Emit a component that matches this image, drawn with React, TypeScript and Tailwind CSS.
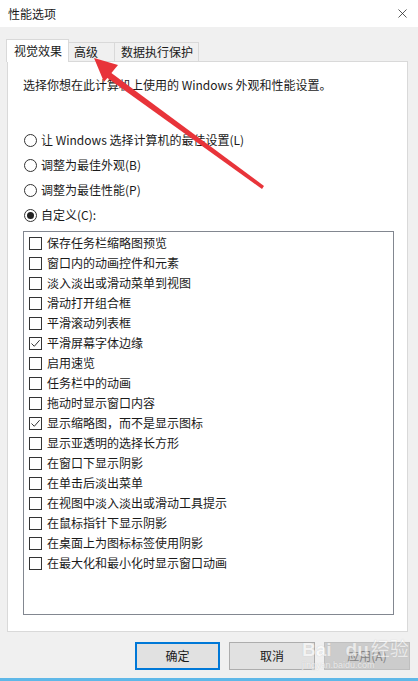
import { X } from 'lucide-react';

const items: { label: string; checked: boolean }[] = [
  { label: '保存任务栏缩略图预览', checked: false },
  { label: '窗口内的动画控件和元素', checked: false },
  { label: '淡入淡出或滑动菜单到视图', checked: false },
  { label: '滑动打开组合框', checked: false },
  { label: '平滑滚动列表框', checked: false },
  { label: '平滑屏幕字体边缘', checked: true },
  { label: '启用速览', checked: false },
  { label: '任务栏中的动画', checked: false },
  { label: '拖动时显示窗口内容', checked: false },
  { label: '显示缩略图，而不是显示图标', checked: true },
  { label: '显示亚透明的选择长方形', checked: false },
  { label: '在窗口下显示阴影', checked: false },
  { label: '在单击后淡出菜单', checked: false },
  { label: '在视图中淡入淡出或滑动工具提示', checked: false },
  { label: '在鼠标指针下显示阴影', checked: false },
  { label: '在桌面上为图标标签使用阴影', checked: false },
  { label: '在最大化和最小化时显示窗口动画', checked: false },
];

const radios = [
  { label: '让 Windows 选择计算机的最佳设置(L)', on: false },
  { label: '调整为最佳外观(B)', on: false },
  { label: '调整为最佳性能(P)', on: false },
  { label: '自定义(C):', on: true },
];

function Radio({ on }: { on: boolean }) {
  return (
    <span className="w-[13px] h-[13px] rounded-full border border-[#333] bg-white flex items-center justify-center shrink-0">
      {on && <span className="w-[7px] h-[7px] rounded-full bg-[#222]" />}
    </span>
  );
}

function Check({ on }: { on: boolean }) {
  return (
    <span className="w-[13px] h-[13px] border border-[#333] bg-white flex items-center justify-center shrink-0">
      {on && (
        <svg width="11" height="11" viewBox="0 0 11 11">
          <path d="M1.5 5.5 L4.3 8.3 L9.6 2.2" fill="none" stroke="#333" strokeWidth="1" />
        </svg>
      )}
    </span>
  );
}

export default function App() {
  return (
    <div
      className="relative w-[418px] h-[681px] bg-[#f0f0f0] overflow-hidden text-[12px] text-[#1a1a1a] flex flex-col"
      style={{ fontFamily: '"Noto Sans CJK SC", "Noto Sans", sans-serif' }}
    >
      {/* Title bar */}
      <div className="h-[27px] bg-white flex items-center justify-between pl-[8px] pr-[8px] shrink-0">
        <span className="text-[12px]">性能选项</span>
        <X className="w-[15px] h-[15px] text-[#222]" strokeWidth={1.2} />
      </div>

      {/* Tabs */}
      <div className="flex items-end pl-[6px] h-[34px] shrink-0">
        <div className="relative z-10 h-[23px] pl-[7px] pr-[6px] flex items-center bg-white border border-b-0 border-[#d9d9d9] -mb-px">
          视觉效果
        </div>
        <div className="h-[19px] pl-[5px] pr-[16px] flex items-center bg-[#f0f0f0] border border-l-0 border-b-0 border-[#d9d9d9]">
          高级
        </div>
        <div className="h-[19px] pl-[6px] pr-[5px] flex items-center bg-[#f0f0f0] border border-l-0 border-b-0 border-[#d9d9d9]">
          数据执行保护
        </div>
      </div>

      {/* Panel */}
      <div className="ml-[7px] mr-[10px] h-[571px] bg-white border border-[#d9d9d9] flex flex-col pl-[15px] pr-[13px] shrink-0">
        <p className="mt-[15px] leading-[16px]">选择你想在此计算机上使用的 Windows 外观和性能设置。</p>
        <div className="mt-[38px] flex flex-col gap-[7px]">
          {radios.map((r) => (
            <div key={r.label} className="h-[18px] flex items-center gap-[4px] pl-[1px]">
              <Radio on={r.on} />
              <span>{r.label}</span>
            </div>
          ))}
        </div>
        <div className="mt-[7px] h-[384px] border border-[#828790] pt-[1px] flex flex-col">
          {items.map((it) => (
            <div key={it.label} className="h-[20px] flex items-center gap-[5px] pl-[5px]">
              <Check on={it.checked} />
              <span className="whitespace-nowrap">{it.label}</span>
            </div>
          ))}
        </div>
      </div>

      {/* Buttons */}
      <div className="flex justify-end gap-[9px] pr-[8px] pt-[10px]">
        <button className="w-[85px] h-[28px] bg-[#e1e1e1] border-2 border-[#0078d7] text-[12px]">确定</button>
        <button className="w-[86px] h-[28px] bg-[#e1e1e1] border border-[#adadad] text-[12px]">取消</button>
        <button className="w-[86px] h-[28px] bg-[#cccccc] border border-[#bfbfbf] text-[12px] text-[#838383]">应用(A)</button>
      </div>

      <div className="mt-auto h-[3px] bg-[#5fb8e8]" />

      {/* Baidu watermark */}
      <div className="absolute left-[302px] top-[638px] pointer-events-none flex flex-col items-start opacity-60 whitespace-nowrap">
        <span className="text-[19px] font-bold leading-[20px] text-white" style={{ fontFamily: '"Liberation Sans", sans-serif', textShadow: '0 0 1px #aaa' }}>
          Bai<span className="ml-[14px]">du</span>
          <span className="ml-[2px] font-normal" style={{ fontFamily: '"Noto Sans CJK SC", sans-serif' }}>经验</span>
        </span>
        <span className="text-[9px] leading-[10px] text-white" style={{ fontFamily: '"Liberation Sans", sans-serif', textShadow: '0 0 1px #aaa' }}>
          jingyan.baidu.com
        </span>
      </div>

      {/* Red arrow annotation */}
      <svg className="absolute left-0 top-0 pointer-events-none" width="418" height="681">
        <path d="M262 189 L264 186 L110 72 L106 77 Z" fill="#e8343a" />
        <path d="M94 58 L118 65 L104 82 Z" fill="#e8343a" />
      </svg>
    </div>
  );
}
